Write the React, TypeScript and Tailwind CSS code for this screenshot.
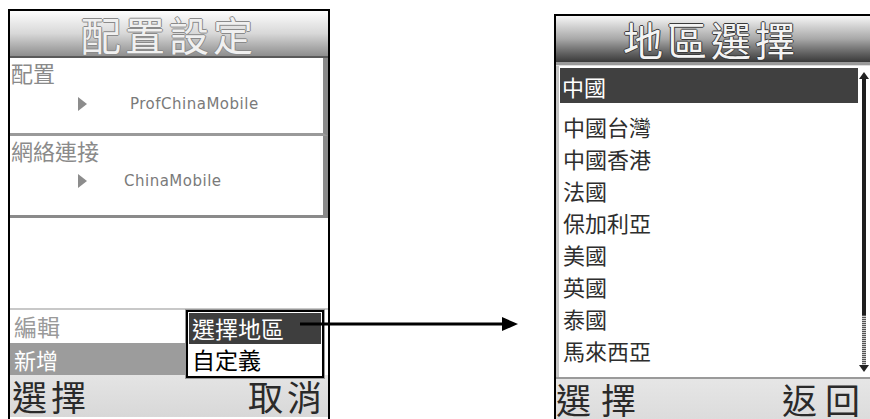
import React from "react";

const cjk = "font-['Noto_Sans_CJK_TC','Noto_Sans_CJK_SC',sans-serif]";

function Tri() {
  return (
    <svg width="9" height="14" viewBox="0 0 9 14" className="shrink-0">
      <polygon points="0,0 9,7 0,14" fill="#8c8c8c" />
    </svg>
  );
}

function SettingsScreen() {
  return (
    <div className="relative mt-[9px] ml-[8px] w-[322px] h-[410px] border-x-2 border-t-2 border-black flex flex-col shrink-0">
      <div className="h-[47px] bg-linear-to-b from-[#fdfdfd] via-[#d8d8d8] to-[#8e8e8e] border-b-2 border-[#5a5a5a] flex items-center justify-center">
        <span
          className={`${cjk} text-[40px] leading-none tracking-[4px] text-[#f0f0f0] [text-shadow:1px_0_#8a8a8a,-1px_0_#8a8a8a,0_1px_#8a8a8a,0_-1px_#8a8a8a]`}
        >
          配置設定
        </span>
      </div>
      <div className="h-[78px] border-r-[5px] border-r-[#8a8a8a] border-b-[3px] border-b-[#9a9a9a] flex flex-col">
        <span className={`${cjk} text-[22px] leading-[28px] text-[#8a8a8a] pl-[1px]`}>配置</span>
        <div className="flex items-center mt-[7px] ml-[68px]">
          <Tri />
          <span className="ml-[43px] font-['DejaVu_Sans',sans-serif] text-[15px] tracking-[0.5px] text-[#7a7a7a]">
            ProfChinaMobile
          </span>
        </div>
      </div>
      <div className="h-[82px] border-r-[5px] border-r-[#8a8a8a] border-b-[3px] border-b-[#8a8a8a] flex flex-col">
        <span className={`${cjk} text-[22px] leading-[28px] text-[#8a8a8a] pl-[1px]`}>網絡連接</span>
        <div className="flex items-center mt-[6px] ml-[68px]">
          <Tri />
          <span className="ml-[37px] font-['DejaVu_Sans',sans-serif] text-[15px] tracking-[0.5px] text-[#7a7a7a]">
            ChinaMobile
          </span>
        </div>
      </div>
      <div className="h-[90px]" />
      <div className="h-[35px] border-t-2 border-[#c8c8c8] flex items-center">
        <span className={`${cjk} text-[23px] leading-none text-[#9a9a9a] pl-[4px]`}>編輯</span>
      </div>
      <div className="h-[32px] flex">
        <div className="w-[178px] bg-[#9c9c9c] flex items-center">
          <span className={`${cjk} text-[22px] leading-none text-white pl-[4px]`}>新增</span>
        </div>
      </div>
      <div className="h-[42px] overflow-hidden bg-linear-to-b from-[#e4e4e4] to-[#d8d8d8] flex items-center justify-between px-[2px]">
        <span className={`${cjk} text-[35px] leading-[38px] text-[#2a2a2a] tracking-[4px]`}>選擇</span>
        <span className={`${cjk} text-[35px] leading-[38px] text-[#2a2a2a] tracking-[4px]`}>取消</span>
      </div>
      <div className="absolute left-[176px] top-[299px] w-[138px] h-[68px] border-2 border-black bg-white outline outline-1 outline-[#999] flex flex-col p-[1px]">
        <div className="h-[31px] bg-[#3e3e3e] flex items-center">
          <span className={`${cjk} text-[23px] leading-none text-white pl-[3px]`}>選擇地區</span>
        </div>
        <div className="h-[31px] flex items-center">
          <span className={`${cjk} text-[23px] leading-none text-black pl-[3px]`}>自定義</span>
        </div>
      </div>
    </div>
  );
}

const regions = ["中國台灣", "中國香港", "法國", "保加利亞", "美國", "英國", "泰國", "馬來西亞"];

function RegionScreen() {
  return (
    <div className="mt-[14px] ml-[224px] w-[316px] h-[405px] border-l-2 border-t-2 border-black flex flex-col shrink-0">
      <div className="h-[46px] bg-linear-to-b from-[#f6f6f6] via-[#a8a8a8] to-[#3a3a3a] flex items-center justify-center pr-[4px]">
        <span
          className={`${cjk} text-[40px] leading-none tracking-[4px] text-[#f4f4f4] [text-shadow:1px_0_#3a3a3a,-1px_0_#3a3a3a,0_1px_#3a3a3a,0_-1px_#3a3a3a]`}
        >
          地區選擇
        </span>
      </div>
      <div className="h-[4px] bg-[#9a9a9a] border-b border-[#ddd]" />
      <div className="h-[311px] flex border-l-[3px] border-[#c4c4c4] pt-[2px]">
        <div className="flex-1 flex flex-col pl-[1px]">
          <div className="h-[35px] bg-[#404040] flex items-center">
            <span className={`${cjk} text-[22px] leading-none text-white pl-[2px]`}>中國</span>
          </div>
          <div className="h-[7px]" />
          {regions.map((r) => (
            <div key={r} className="h-[32px] flex items-center">
              <span className={`${cjk} text-[22px] leading-none text-[#2e2e2e] pl-[3px]`}>{r}</span>
            </div>
          ))}
        </div>
        <div className="w-[12px] flex flex-col items-center pt-[4px]">
          <svg width="10" height="7" viewBox="0 0 10 7">
            <polygon points="5,0 10,7 0,7" fill="#222" />
          </svg>
          <div className="w-[4px] h-[236px] bg-[#1e1e1e]" />
          <div className="w-[4px] h-[50px] bg-[repeating-linear-gradient(to_bottom,#555_0px,#555_1px,#ccc_1px,#ccc_2px)]" />
          <svg width="10" height="7" viewBox="0 0 10 7">
            <polygon points="0,0 10,0 5,7" fill="#222" />
          </svg>
        </div>
      </div>
      <div className="h-[42px] overflow-hidden border-t-2 border-[#9a9a9a] bg-linear-to-b from-[#e6e6e6] to-[#dcdcdc] flex items-center justify-between pr-[2px]">
        <span className={`${cjk} text-[35px] leading-[38px] text-[#2a2a2a] tracking-[10px]`}>選擇</span>
        <span className={`${cjk} text-[35px] leading-[38px] text-[#2a2a2a] tracking-[8px]`}>返回</span>
      </div>
    </div>
  );
}

export default function App() {
  return (
    <div className="relative w-[870px] h-[419px] overflow-hidden bg-white flex">
      <SettingsScreen />
      <RegionScreen />
      <svg className="absolute left-[300px] top-[314px]" width="222" height="20" viewBox="0 0 222 20">
        <line x1="0" y1="10" x2="205" y2="10" stroke="#000" strokeWidth="3" />
        <polygon points="202,3 218,10 202,17" fill="#000" />
      </svg>
    </div>
  );
}
